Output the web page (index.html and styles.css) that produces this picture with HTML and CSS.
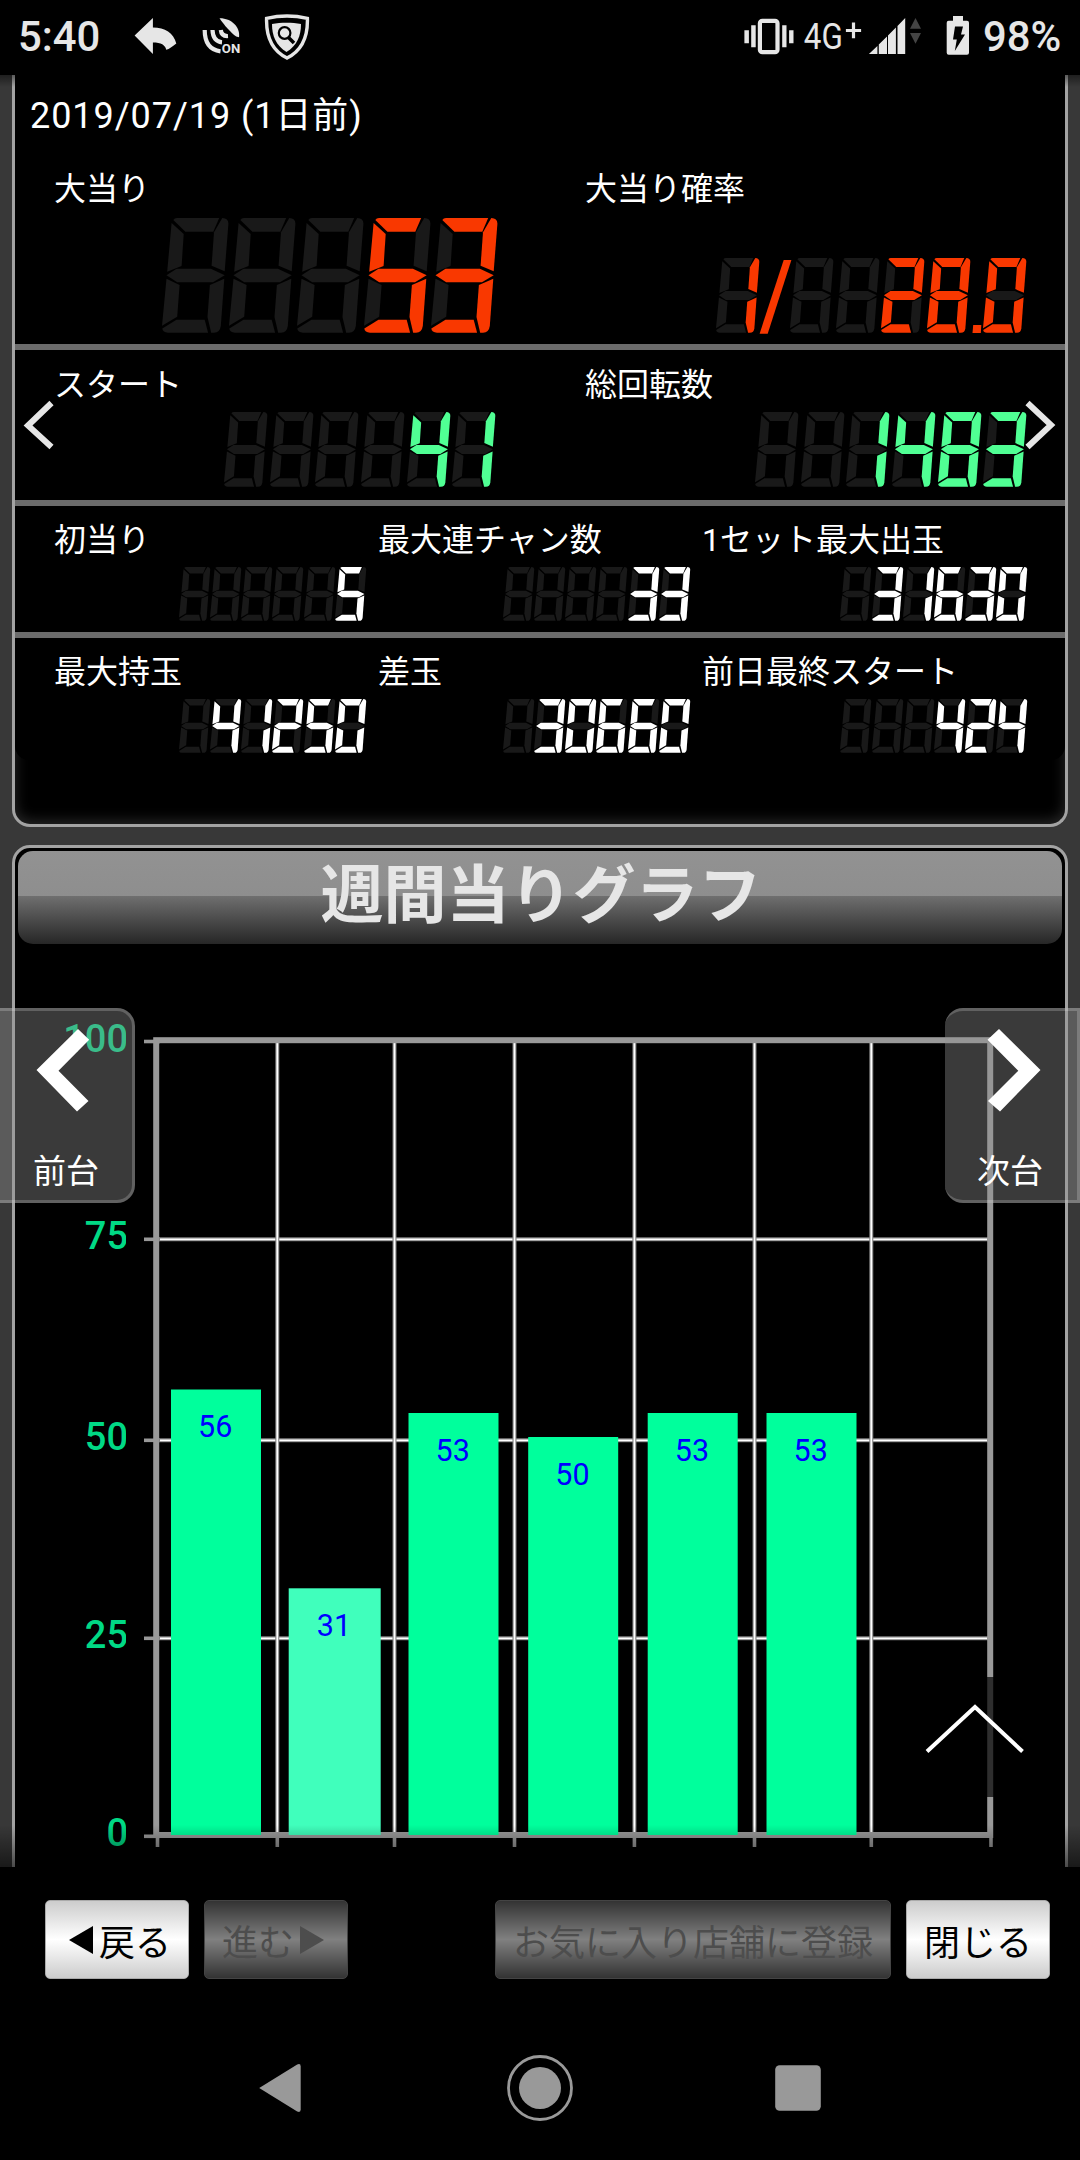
FILE: index.html
```html
<!DOCTYPE html>
<html lang="ja">
<head>
  <meta charset="UTF-8" />
  <title>週間当りグラフ</title>
  <meta name="viewport" content="width=device-width, initial-scale=1.0" />
  <link rel="stylesheet" href="styles.css">
</head>
<body>

<header class="statusbar">
  <span class="clock">5:40</span>
  <svg class="ic-reply" width="44" height="40" viewBox="134 16 44 40">
    <path d="M134.6 35.5 L152.9 18 V27.5 C165 27.5 173.5 33 176.3 43.5 C172 47 169.5 48.8 166.2 49.8 C165.5 45 161 42.5 152.9 42.5 V54 Z" />
  </svg>
  <svg class="ic-gps" width="40" height="40" viewBox="202 16 40 40">
    <path d="M219.5 18.3 C231 18 240.5 27 239 37.3 L236.2 36.6 C230.5 32.5 224.5 25.5 219.5 18.3 Z" />
    <path class="line" d="M204.7 30 C204.7 43 210 50 220.5 51.3" />
    <path class="line" d="M212.5 30 C212.8 37.5 216 41.8 222 42.3" />
    <path class="line" d="M220.8 30 C221.2 34 223.5 36.3 228 36" />
    <text x="221.8" y="53.4" textLength="18.4" lengthAdjust="spacingAndGlyphs">ON</text>
  </svg>
  <svg class="ic-shield" width="46" height="48" viewBox="264 13 46 48">
    <path class="outline" d="M266.6 18.4 C279 15.5 295 15.5 307.4 18.4 C308 38 301 51 287 58 C273 51 266 38 266.6 18.4 Z" />
    <path d="M272 24 C281 22.3 292 22.3 301 24 C301 36 297 45.5 286.5 52 C276 45.5 272 36 272 24 Z" />
    <circle class="lens" cx="284.6" cy="33" r="5.8" />
    <path class="handle" d="M288.5 37.5 L294 43" />
  </svg>
  <span class="spacer"></span>
  <svg class="ic-vibrate" width="50" height="38" viewBox="743.5 18 50 38">
    <rect class="phone" x="759.4" y="20.8" width="17.6" height="31.4" rx="2.5" />
    <path d="M750.7 25.3h4.5v22h-4.5z M743.9 30.3h4.5v13h-4.5z M781.7 25.3h4.3v22h-4.3z M788.6 30.3h4.4v13h-4.4z" />
  </svg>
  <svg class="ic-4g" width="60" height="60" viewBox="803 6 60 60">
    <text x="803.8" y="49" textLength="39" lengthAdjust="spacingAndGlyphs">4G</text>
    <path d="M851.9 22.5h3.2v6.4h6v3h-6v6.4h-3.2v-6.4h-6v-3h6z" />
  </svg>
  <svg class="ic-signal" width="54" height="38" viewBox="868 17 54 38">
    <path d="M868.9 54 L877.4 46 V54 Z M878.8 54 V44.5 L887 36.5 V54 Z M888 54 V35.5 L895.9 27.5 V54 Z M897.5 54 V26 L905.2 18 V54 Z" />
    <path class="dim" d="M910 28.8 L915.5 18 L921 28.8 Z M910 33 H921 L915.5 43.8 Z" />
  </svg>
  <svg class="ic-battery" width="24" height="40" viewBox="946 16 24 40">
    <path d="M953 16h10v4.7h4q2 0 2 2v30q0 2-2 2h-18.3q-2 0-2-2v-30q0-2 2-2h4.3z" />
    <path class="bolt" d="M955 26.5 H963 L961 34.5 H965 L954.8 51 L956.8 39.5 H953 Z" />
  </svg>
  <span class="percent">98%</span>
</header>

<main class="page">
  <section class="panel panel-data">
    <div class="date">2019/07/19 (1日前)</div>

    <div class="fila fila-1">
      <div class="dato">
        <span class="label">大当り</span>
        <div class="led lg red" data-cells="5" data-value="53"></div>
      </div>
      <div class="dato">
        <span class="label">大当り確率</span>
        <div class="led md red" data-value="1/  28.0"></div>
      </div>
    </div>

    <div class="fila fila-2">
      <div class="dato">
        <span class="label">スタート</span>
        <div class="led md green" data-cells="6" data-value="41"></div>
      </div>
      <div class="dato">
        <span class="label">総回転数</span>
        <div class="led md green" data-cells="6" data-value="1483"></div>
      </div>
      <svg class="arrow arrow-prev" viewBox="0 0 32 50"><path d="M28.5 3 L5 25.5 L28.5 47" /></svg>
      <svg class="arrow arrow-next" viewBox="0 0 32 50"><path d="M3.5 3 L27 25 L3.5 47" /></svg>
    </div>

    <div class="fila fila-3">
      <div class="dato">
        <span class="label">初当り</span>
        <div class="led sm white" data-cells="6" data-value="5"></div>
      </div>
      <div class="dato">
        <span class="label">最大連チャン数</span>
        <div class="led sm white" data-cells="6" data-value="33"></div>
      </div>
      <div class="dato">
        <span class="label">1セット最大出玉</span>
        <div class="led sm white" data-cells="6" data-value="31630"></div>
      </div>
    </div>

    <div class="fila fila-3 last">
      <div class="dato">
        <span class="label">最大持玉</span>
        <div class="led sm white" data-cells="6" data-value="41250"></div>
      </div>
      <div class="dato">
        <span class="label">差玉</span>
        <div class="led sm white" data-cells="6" data-value="30660"></div>
      </div>
      <div class="dato">
        <span class="label">前日最終スタート</span>
        <div class="led sm white" data-cells="6" data-value="424"></div>
      </div>
    </div>
  </section>

  <section class="panel panel-graph">
    <h2>週間当りグラフ</h2>
    <svg id="graph" class="graph" width="1050" height="930" viewBox="15 944 1050 930"></svg>
  </section>

  <a class="side side-prev">
    <svg width="54" height="84" viewBox="0 0 54 84"><path d="M0.5 42 L42 1 L53.2 11.7 L22.5 42.7 L52.5 73 L41 83.5 Z" /></svg>
    <span>前台</span>
  </a>
  <a class="side side-next">
    <svg width="54" height="84" viewBox="0 0 54 84"><path d="M53.5 42 L12 1 L0.5 11.7 L31.3 42.7 L1 73 L13 83.5 Z" /></svg>
    <span>次台</span>
  </a>
  <a class="to-top">
    <svg width="120" height="120" viewBox="0 0 120 120"><path d="M12 74.5 L60 30 L107.5 74.5" /></svg>
  </a>
  <div class="shade"></div>
</main>

<div class="toolbar">
  <button class="btn btn-sm"><svg width="24" height="28" viewBox="0 0 24 28"><path d="M0 14 L24 0 V28 Z" /></svg>戻る</button>
  <button class="btn btn-sm" disabled>進む<svg width="24" height="28" viewBox="0 0 24 28"><path d="M24 14 L0 0 V28 Z" /></svg></button>
  <button class="btn btn-fav" disabled>お気に入り店舗に登録</button>
  <button class="btn btn-sm">閉じる</button>
</div>

<nav class="navbar">
  <svg width="46" height="50" viewBox="1.3 0 46 50"><path d="M1.5 25 L39.5 1.5 Q43 0 43 3.5 V46.5 Q43 50 39.5 48.5 Z" /></svg>
  <svg width="68" height="68" viewBox="0 0 68 68"><circle class="ring" cx="34" cy="34" r="31.5" /><circle cx="34" cy="34" r="21" /></svg>
  <svg width="46" height="46" viewBox="0 0 46 46"><rect x="0.2" y="0.2" width="45.6" height="45.6" rx="4.5" /></svg>
</nav>

<script>
  // 7セグメント表示
  const segmentos = {
    a: "M11.3 2 Q12.5 0 15 0 H57.2 L51.3 13.7 H23.4 Z",
    b: "M60.3 0 Q66.8 0.5 66.4 6 L62.7 53.3 L49.6 47.7 L52 14.3 Z",
    c: "M62.3 60.7 L58.8 108 Q58 114.5 52 114.7 H49.2 L45.5 99 L47.9 67 Z",
    d: "M0.3 110.5 L14.5 101.7 H42.7 L46.1 114.7 H6 Q0.8 114.5 0.3 110.5 Z",
    e: "M4.5 60.7 L17.6 67 L15.2 98.7 L0 107.7 Z",
    f: "M9.6 5 L21.7 16 L19.6 48 L5.2 53.7 Z",
    g: "M4.5 57.3 L14.5 50.7 H48.9 L62.7 57.3 L51 64.3 H15.2 Z"
  };

  const digitos = {
    " ": "", "0": "abcdef", "1": "bc", "2": "abged", "3": "abgcd", "4": "fgbc",
    "5": "afgcd", "6": "afgedc", "7": "abc", "8": "abcdefg", "9": "abcdfg"
  };

  function crearDigito(ch) {
    if (ch === "/") {
      return '<svg class="slash" viewBox="0 0 28.4 75"><path class="on" d="M24.7 2 H32.4 L8.7 75.7 H0.6 Z" /></svg>';
    }
    if (ch === ".") {
      return '<svg class="dot" viewBox="0 0 10.8 75"><path class="on" d="M3.2 67 H11.3 L10.8 75 H2.5 Z" /></svg>';
    }
    const partes = Object.keys(segmentos).map(s =>
      `<path class="${digitos[ch].includes(s) ? "on" : "off"}" d="${segmentos[s]}" />`
    );
    return `<svg class="digit" viewBox="0 0 66.4 115">${partes.join("")}</svg>`;
  }

  document.querySelectorAll(".led").forEach(led => {
    const valor = led.dataset.value.padStart(led.dataset.cells || 0, " ");
    led.innerHTML = [...valor].map(crearDigito).join("");
  });

  // 週間グラフ
  const barras = [
    { x: 171, w: 90, y: 1389.5, n: 56 },
    { x: 288.7, w: 92, y: 1588.3, n: 31, low: true },
    { x: 408.5, w: 90, y: 1413, n: 53 },
    { x: 528.2, w: 90, y: 1437, n: 50 },
    { x: 647.7, w: 90, y: 1413, n: 53 },
    { x: 766.5, w: 90, y: 1413, n: 53 }
  ];
  const columnas = [277.3, 394.5, 514.5, 634.4, 754.5, 871.3];
  const niveles = [[100, 1041.5], [75, 1239.3], [50, 1440.3], [25, 1638.3], [0, 1836.3]];

  function dibujarGrafico() {
    let g = '<clipPath id="eje"><rect x="15" y="944" width="111" height="930" /></clipPath>';
    niveles.forEach(([n, y]) => {
      g += `<path class="tick" d="M144 ${y} H160" />`;
      if (n > 0 && n < 100) {
        g += `<path class="grid" d="M158 ${y} H990" /><path class="grid-core" d="M160 ${y} H987" />`;
      }
    });
    columnas.forEach(x => {
      g += `<path class="grid" d="M${x} 1042 V1834" /><path class="grid-core" d="M${x} 1043 V1832" />`;
    });
    [157.5, ...columnas, 991].forEach(x => g += `<path class="tick" d="M${x} 1836 V1847" />`);
    g += '<rect class="frame" x="156.2" y="1040.2" width="834" height="794.8" />';
    barras.forEach(b => {
      g += `<rect class="bar${b.low ? " low" : ""}" x="${b.x}" y="${b.y}" width="${b.w}" height="${1835 - b.y}" />`;
      g += `<text class="value" x="${b.x + b.w / 2 - 0.8}" y="${b.y + 47.8}">${b.n}</text>`;
    });
    g += '<g clip-path="url(#eje)">';
    niveles.forEach(([n, y]) => g += `<text class="level" x="128" y="${y + 10}">${n}</text>`);
    g += "</g>";
    document.getElementById("graph").innerHTML = g;
  }

  dibujarGrafico();
</script>

</body>
</html>
```
FILE: styles.css
```css
* {
  box-sizing: border-box;
}

body {
  margin: 0;
  width: 1080px;
  height: 2160px;
  overflow: hidden;
  background: #000;
  color: #fff;
  font-family: Roboto, "Noto Sans CJK JP", sans-serif;
}

svg {
  display: block;
  flex: none;
}

.statusbar {
  display: flex;
  align-items: flex-start;
  height: 75px;
  padding: 0 19px 0 18px;
  color: #e6e6e6;
}

.statusbar svg {
  fill: #e6e6e6;
}

.clock, .percent {
  font-size: 41.8px;
  font-weight: 500;
  line-height: 48px;
  margin-top: 13px;
}

.clock {
  width: 116px;
}

.ic-reply, .ic-gps, .ic-battery {
  margin-top: 16px;
}

.ic-gps {
  margin-left: 24px;
}

.ic-gps .line {
  fill: none;
  stroke: #e6e6e6;
  stroke-width: 4.2;
}

.ic-gps text {
  font-size: 13.5px;
  font-weight: 700;
}

.ic-shield {
  margin: 13px 0 0 22px;
}

.ic-shield .outline {
  fill: #000;
  stroke: #e6e6e6;
  stroke-width: 3.4;
}

.ic-shield .lens {
  fill: none;
  stroke: #000;
  stroke-width: 2.2;
}

.ic-shield .handle {
  stroke: #000;
  stroke-width: 3.6;
}

.spacer {
  flex: 1;
}

.ic-vibrate {
  margin: 18px 9.5px 0 0;
}

.ic-vibrate .phone {
  fill: none;
  stroke: #e6e6e6;
  stroke-width: 4.2;
}

.ic-4g {
  margin: 6px 5px 0 0;
}

.ic-4g text {
  font-size: 36px;
}

.ic-signal {
  margin: 17px 24px 0 0;
}

.ic-signal .dim {
  fill: #444;
}

.ic-battery {
  margin-right: 13px;
}

.ic-battery .bolt {
  fill: #000;
}

.percent {
  width: 78px;
  white-space: nowrap;
}

.page {
  position: relative;
  height: 1792px;
  padding: 0 12px;
  overflow: hidden;
  background: #383838;
}

.panel {
  border: 3px solid #a3a3a3;
  background: #000;
}

.panel-data {
  height: 752px;
  border-top: none;
  border-radius: 0 0 18px 18px;
  box-shadow: inset 0 -3px 14px rgba(255, 255, 255, 0.16);
}

.date {
  padding: 16px 15px 0;
  background: #000;
  font-size: 36px;
  letter-spacing: 0.95px;
  line-height: 50px;
}

.fila {
  display: grid;
  grid-template-columns: 531px 530px;
  padding-left: 39px;
  border-bottom: 6px solid #6b6b6b;
  background: #000;
}

.fila-1 {
  height: 209px;
  padding-top: 28px;
  padding-bottom: 11px;
}

.fila-2 {
  position: relative;
  height: 156px;
  padding-top: 15px;
  padding-bottom: 13px;
}

.fila-3 {
  grid-template-columns: 324px 324px 337px;
  height: 132px;
  padding-top: 14px;
  padding-bottom: 11px;
}

.fila-3.last {
  height: 122px;
  padding-bottom: 7px;
  border-bottom: none;
  border-radius: 0 0 14px 14px;
}

.dato {
  display: flex;
  flex-direction: column;
  justify-content: space-between;
  width: 441.5px;
}

.fila-3 .dato {
  width: 312px;
}

.fila-3 .dato:last-child {
  width: 325.5px;
}

.label {
  font-size: 32px;
  line-height: 40px;
  white-space: nowrap;
}

.led {
  display: flex;
  justify-content: flex-end;
}

.led svg {
  overflow: visible;
}

.led.lg {
  margin-right: -2px;
}

.lg .digit {
  width: 66.4px;
  height: 115px;
  margin-left: 0.9px;
}

.md .digit {
  width: 43.3px;
  height: 75px;
  margin-left: 2.3px;
}

.sm .digit {
  width: 31.2px;
  height: 54px;
}

.slash {
  width: 28.4px;
  height: 75px;
}

.dot {
  width: 10.8px;
  height: 75px;
}

.led .off {
  fill: #191919;
}

.red .on {
  fill: #f93800;
}

.green .on {
  fill: #50ff94;
}

.white .on {
  fill: #fff;
}

.arrow {
  position: absolute;
  top: 50px;
  width: 32px;
  height: 50px;
  fill: none;
  stroke: #e6e6e6;
  stroke-width: 6;
}

.arrow-prev {
  left: 8px;
}

.arrow-next {
  right: 9px;
}

.panel-graph {
  height: 1100px;
  margin-top: 18px;
  border-radius: 18px 18px 0 0;
}

.panel-graph h2 {
  height: 93px;
  margin: 3px 3px 0;
  padding-left: 2px;
  border-radius: 15px;
  background: linear-gradient(#929292, #8e8e8e 48.4%, #6f6f6f 48.4%, #262626);
  color: #e6e6e6;
  font-size: 63px;
  font-weight: 700;
  line-height: 90px;
  text-align: center;
}

.graph .grid {
  stroke: #808080;
  stroke-width: 4;
}

.graph .grid-core {
  stroke: #fff;
  stroke-width: 1.8;
}

.graph .tick {
  stroke: #999;
  stroke-width: 3.6;
}

.graph .frame {
  fill: none;
  stroke: #999;
  stroke-width: 6;
}

.graph .bar {
  fill: #00ff9c;
}

.graph .bar.low {
  fill: #40ffbc;
}

.graph .value {
  fill: #00f;
  font-size: 30.5px;
  text-anchor: middle;
}

.graph .level {
  fill: #00d985;
  font-size: 38px;
  font-weight: 500;
  text-anchor: end;
}

.side {
  position: absolute;
  top: 933px;
  width: 135px;
  height: 195px;
  border: 3px solid rgba(255, 255, 255, 0.2);
  border-left: none;
  background: rgba(145, 145, 145, 0.4);
  font-size: 33px;
  line-height: 40px;
}

.side svg {
  fill: #fff;
}

.side span {
  display: block;
  margin-top: 40px;
}

.side-prev {
  left: 0;
  padding: 17px 0 0 36px;
  border-radius: 0 18px 18px 0;
}

.side-prev span {
  margin-left: -3px;
}

.side-next {
  right: 0;
  padding: 17px 0 0 42px;
  border-radius: 18px 0 0 18px;
}

.side-next span {
  margin-left: -10px;
}

.to-top {
  position: absolute;
  left: 915px;
  top: 1602px;
  width: 120px;
  height: 120px;
  background: rgba(0, 0, 0, 0.7);
}

.to-top path {
  fill: none;
  stroke: #fff;
  stroke-width: 4;
}

/* 上下の影 */
.shade {
  position: absolute;
  inset: 0;
  background:
    linear-gradient(rgba(0, 0, 0, 0.45), rgba(0, 0, 0, 0)) top / 100% 12px no-repeat,
    linear-gradient(rgba(0, 0, 0, 0), rgba(0, 0, 0, 0.55)) bottom / 100% 42px no-repeat;
  pointer-events: none;
}

.toolbar {
  display: flex;
  gap: 15px;
  height: 149px;
  padding: 33px 30px 0 45px;
}

.btn {
  display: flex;
  align-items: center;
  justify-content: center;
  height: 79px;
  padding: 0;
  border: 1px solid #aaa;
  border-radius: 5px;
  background: linear-gradient(#ccc, #fff 50%, #ccc);
  color: #000;
  font-family: "Noto Sans CJK JP", sans-serif;
  font-size: 36px;
  font-weight: 400;
}

.btn svg {
  margin: 0 6px;
  fill: currentColor;
}

.btn:disabled {
  border-color: #444;
  background: linear-gradient(#333, #808080 50%, #333);
  color: #4d4d4d;
}

.btn-sm {
  width: 144px;
}

.btn-fav {
  width: 396px;
  margin-left: auto;
}

.navbar {
  display: flex;
  align-items: center;
  justify-content: center;
  gap: 201px;
  height: 144px;
}

.navbar svg {
  fill: #999;
}

.navbar .ring {
  fill: none;
  stroke: #999;
  stroke-width: 2.8;
}
```
